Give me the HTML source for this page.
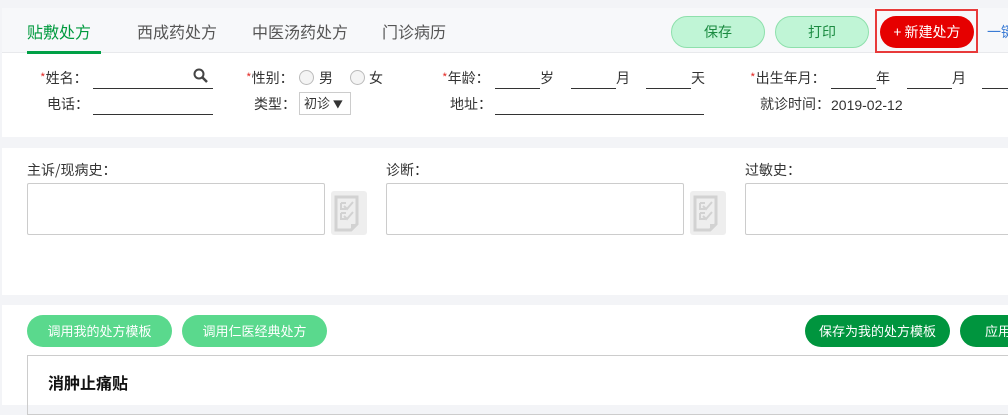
<!DOCTYPE html>
<html><head><meta charset="utf-8"><style>
*{margin:0;padding:0;box-sizing:border-box}
body{width:1008px;height:402px;overflow:hidden;background:#f3f4f7;font-family:"Noto Sans CJK SC","Liberation Sans",sans-serif;font-size:14px;color:#333;position:relative}
.a{position:absolute;white-space:nowrap;line-height:20px}
.panel{position:absolute;left:2px;right:0;background:#fff}
.ul{position:absolute;height:1px;background:#333}
.star{color:#e53935;font-size:12px;vertical-align:top}
.btn{position:absolute;border-radius:17px;text-align:center;font-size:14px}
.radio{position:absolute;width:15px;height:15px;border:1px solid #bbb;border-radius:50%;background:#f4f4f4}
.ta{position:absolute;border:1px solid #ccc;border-radius:2px;background:#fff}
.ic{position:absolute;width:36px;height:44px;background:#eee;border-radius:3px}
.l{font-family:"Liberation Sans",sans-serif}
</style></head><body>
<div class="panel" style="top:8px;height:129px"></div>
<div class="a" style="left:2px;right:0;top:8px;height:45px;background:#f7f8fa;border-bottom:1px solid #e8e9ec"></div>
<div class="a" style="left:27px;top:21px;font-size:16px;color:#009a3e">贴敷处方</div>
<div class="a" style="left:27px;top:51px;width:74px;height:3px;background:#00a046"></div>
<div class="a" style="left:137px;top:21px;font-size:16px;color:#555">西成药处方</div>
<div class="a" style="left:252px;top:21px;font-size:16px;color:#555">中医汤药处方</div>
<div class="a" style="left:382px;top:21px;font-size:16px;color:#555">门诊病历</div>
<div class="btn" style="left:671px;top:16px;width:94px;height:32px;line-height:30px;background:#c0f5d6;border:1px solid #8ee0ac;color:#1a8a40">保存</div>
<div class="btn" style="left:775px;top:16px;width:94px;height:32px;line-height:30px;background:#c0f5d6;border:1px solid #8ee0ac;color:#1a8a40">打印</div>
<div class="a" style="left:875px;top:9px;width:103px;height:44px;border:2px solid #e83a3a"></div>
<div class="btn" style="left:880px;top:16px;width:94px;height:32px;line-height:32px;background:#e60000;color:#fff">+ 新建处方</div>
<div class="a" style="left:987px;top:22px;color:#3a7bd5">一键</div>

<div class="a" style="left:40px;top:68px"><span class="star">*</span>姓名：</div>
<div class="ul" style="left:93px;width:120px;top:88px"></div>
<svg class="a" style="left:193px;top:68px" width="15" height="15" viewBox="0 0 15 15"><circle cx="6" cy="6" r="4.5" fill="none" stroke="#444" stroke-width="2"/><path d="M9.5 9.5L14 14" stroke="#444" stroke-width="2.5"/></svg>
<div class="a" style="left:47px;top:94px">电话：</div>
<div class="ul" style="left:93px;width:120px;top:114px"></div>
<div class="a" style="left:246px;top:68px"><span class="star">*</span>性别：</div>
<div class="radio" style="left:299px;top:70px"></div><div class="a" style="left:319px;top:68px">男</div>
<div class="radio" style="left:350px;top:70px"></div><div class="a" style="left:369px;top:68px">女</div>
<div class="a" style="left:254px;top:94px">类型：</div>
<div class="a" style="left:299px;top:92px;width:52px;height:23px;border:1px solid #ccc;font-size:13px;padding:0 0 0 4px">初诊 <span style="font-size:10px">▼</span></div>
<div class="a" style="left:442px;top:68px"><span class="star">*</span>年龄：</div>
<div class="ul" style="left:495px;width:45px;top:88px"></div><div class="a" style="left:540px;top:68px">岁</div>
<div class="ul" style="left:571px;width:45px;top:88px"></div><div class="a" style="left:616px;top:68px">月</div>
<div class="ul" style="left:646px;width:45px;top:88px"></div><div class="a" style="left:691px;top:68px">天</div>
<div class="a" style="left:450px;top:94px">地址：</div>
<div class="ul" style="left:495px;width:209px;top:114px"></div>
<div class="a" style="left:750px;top:68px"><span class="star">*</span>出生年月：</div>
<div class="ul" style="left:831px;width:45px;top:88px"></div><div class="a" style="left:876px;top:68px">年</div>
<div class="ul" style="left:907px;width:45px;top:88px"></div><div class="a" style="left:952px;top:68px">月</div>
<div class="ul" style="left:982px;width:30px;top:88px"></div>
<div class="a" style="left:760px;top:94px">就诊时间：</div>
<div class="a l" style="left:831px;top:95px">2019-02-12</div>

<div class="panel" style="top:148px;height:147px"></div>
<div class="a" style="left:27px;top:160px">主诉/现病史：</div>
<div class="ta" style="left:27px;top:183px;width:298px;height:52px"></div>
<div class="ic" style="left:331px;top:191px"><svg width="36" height="44" viewBox="0 0 36 44"><path d="M5 6H26V33L20 39H5Z" fill="none" stroke="#d2d2d2" stroke-width="3"/><path d="M20 39V33H26" fill="#d2d2d2"/><path d="M10 12h5M10 12v6h5M13 15l3 3 6-7M10 22h5M10 22v6h5M13 25l3 3 6-7" fill="none" stroke="#d2d2d2" stroke-width="2"/></svg></div>
<div class="a" style="left:386px;top:160px">诊断：</div>
<div class="ta" style="left:386px;top:183px;width:298px;height:52px"></div>
<div class="ic" style="left:690px;top:191px"><svg width="36" height="44" viewBox="0 0 36 44"><path d="M5 6H26V33L20 39H5Z" fill="none" stroke="#d2d2d2" stroke-width="3"/><path d="M20 39V33H26" fill="#d2d2d2"/><path d="M10 12h5M10 12v6h5M13 15l3 3 6-7M10 22h5M10 22v6h5M13 25l3 3 6-7" fill="none" stroke="#d2d2d2" stroke-width="2"/></svg></div>
<div class="a" style="left:745px;top:160px">过敏史：</div>
<div class="ta" style="left:745px;top:183px;width:280px;height:52px"></div>

<div class="panel" style="top:305px;height:100px"></div>
<div class="btn" style="left:27px;top:315px;width:145px;height:32px;line-height:32px;background:#5ad98d;color:#fff;font-size:13px">调用我的处方模板</div>
<div class="btn" style="left:182px;top:315px;width:145px;height:32px;line-height:32px;background:#5ad98d;color:#fff;font-size:13px">调用仁医经典处方</div>
<div class="btn" style="left:805px;top:315px;width:145px;height:32px;line-height:32px;background:#00953e;color:#fff;font-size:13px">保存为我的处方模板</div>
<div class="btn" style="left:960px;top:315px;width:145px;height:32px;line-height:32px;background:#00953e;color:#fff;font-size:13px;text-align:left;padding-left:25px">应用</div>
<div class="a" style="left:27px;top:355px;width:1000px;height:60px;border:1px solid #ccc"></div>
<div class="a" style="left:48px;top:372px;font-size:16px;font-weight:bold;color:#111">消肿止痛贴</div>
</body></html>
